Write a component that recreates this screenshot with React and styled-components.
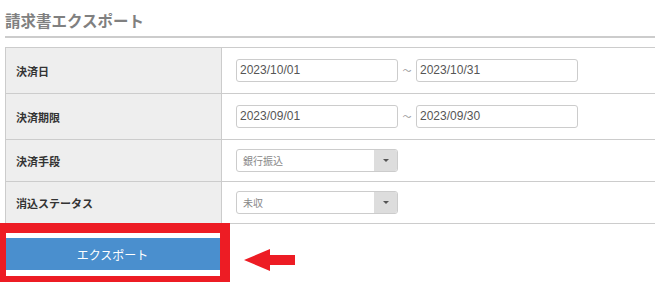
import React from 'react';
import styled, { createGlobalStyle } from 'styled-components';

const GlobalStyle = createGlobalStyle`
  html {
    overflow: hidden;
  }
  body {
    margin: 0;
    padding: 0;
    background: #ffffff;
    font-family: "Liberation Sans", "Noto Sans CJK JP", sans-serif;
  }
`;

const Page = styled.div`
  padding: 0 0 12px 5px;
  width: 660px;
`;

const Title = styled.h2`
  margin: 0;
  padding-top: 10px;
  height: 26px;
  line-height: 20px;
  font-family: "Noto Sans CJK JP", sans-serif;
  font-size: 15.5px;
  font-weight: 700;
  color: #808080;
  border-bottom: 2px solid #cccccc;
  width: 650px;
`;

const Table = styled.table`
  margin-top: 9px;
  border-collapse: collapse;
  width: 654px;
  font-family: "Noto Sans CJK JP", sans-serif;
`;

const Row = styled.tr`
  height: ${(p) => p.h}px;
`;

const Label = styled.th`
  width: 216px;
  box-sizing: border-box;
  padding: 0 0 0 10px;
  background: #eeeeee;
  border: 1px solid #cccccc;
  text-align: left;
  font-size: 11px;
  font-weight: 700;
  color: #333333;
`;

const Value = styled.td`
  padding: 0 0 0 14px;
  border: 1px solid #cccccc;
  border-right: none;
`;

const RangeWrap = styled.div`
  display: flex;
  align-items: center;
`;

const DateInput = styled.input`
  box-sizing: border-box;
  width: 162px;
  height: 23px;
  padding: 0 0 1px 3px;
  border: 1px solid #cccccc;
  border-radius: 3px;
  font-family: "Liberation Sans", Arial, sans-serif;
  font-size: 12px;
  color: #555555;
  outline: none;
`;

const Tilde = styled.span`
  width: 18px;
  text-align: center;
  font-family: "Noto Sans CJK JP", sans-serif;
  font-size: 9px;
  color: #999999;
`;

const SelectBox = styled.div`
  box-sizing: border-box;
  display: flex;
  width: 162px;
  height: 23px;
  border: 1px solid #cccccc;
  border-radius: 3px;
  overflow: hidden;
  background: #ffffff;
`;

const SelectText = styled.span`
  flex: 1;
  padding-left: 6px;
  line-height: 21px;
  font-size: 10px;
  color: #888888;
`;

const SelectArrow = styled.span`
  width: 23px;
  background: #dddddd;
  display: flex;
  align-items: center;
  justify-content: center;

  &::after {
    content: '';
    border-left: 3px solid transparent;
    border-right: 3px solid transparent;
    border-top: 3px solid #555555;
  }
`;

const ButtonArea = styled.div`
  position: relative;
  margin-top: 14px;
  width: 215px;
`;

const ExportButton = styled.button`
  display: block;
  width: 215px;
  height: 32px;
  border: none;
  background: #4a8fce;
  color: #ffffff;
  font-family: "Noto Sans CJK JP", sans-serif;
  font-size: 12px;
  cursor: pointer;
`;

const Highlight = styled.div`
  position: absolute;
  left: -9px;
  top: -15px;
  width: 234px;
  height: 63px;
  box-sizing: border-box;
  border: 10px solid #ed1c24;
  pointer-events: none;
`;

const Arrow = styled.svg`
  position: absolute;
  left: 239px;
  top: 11px;
`;

const DateRange = ({ from, to }) => (
  <RangeWrap>
    <DateInput defaultValue={from} />
    <Tilde>～</Tilde>
    <DateInput defaultValue={to} />
  </RangeWrap>
);

const Select = ({ value }) => (
  <SelectBox>
    <SelectText>{value}</SelectText>
    <SelectArrow />
  </SelectBox>
);

export default function App() {
  return (
    <>
      <GlobalStyle />
      <Page>
        <Title>請求書エクスポート</Title>
        <Table>
          <tbody>
            <Row h={46}>
              <Label>決済日</Label>
              <Value>
                <DateRange from="2023/10/01" to="2023/10/31" />
              </Value>
            </Row>
            <Row h={46}>
              <Label>決済期限</Label>
              <Value>
                <DateRange from="2023/09/01" to="2023/09/30" />
              </Value>
            </Row>
            <Row h={42}>
              <Label>決済手段</Label>
              <Value>
                <Select value="銀行振込" />
              </Value>
            </Row>
            <Row h={42}>
              <Label>消込ステータス</Label>
              <Value>
                <Select value="未収" />
              </Value>
            </Row>
          </tbody>
        </Table>
        <ButtonArea>
          <ExportButton>エクスポート</ExportButton>
          <Highlight />
          <Arrow width="52" height="23" viewBox="0 0 52 23">
            <polygon points="0,11 26,0 26,6 51,6 51,16 26,16 26,22" fill="#ed1c24" />
          </Arrow>
        </ButtonArea>
      </Page>
    </>
  );
}
